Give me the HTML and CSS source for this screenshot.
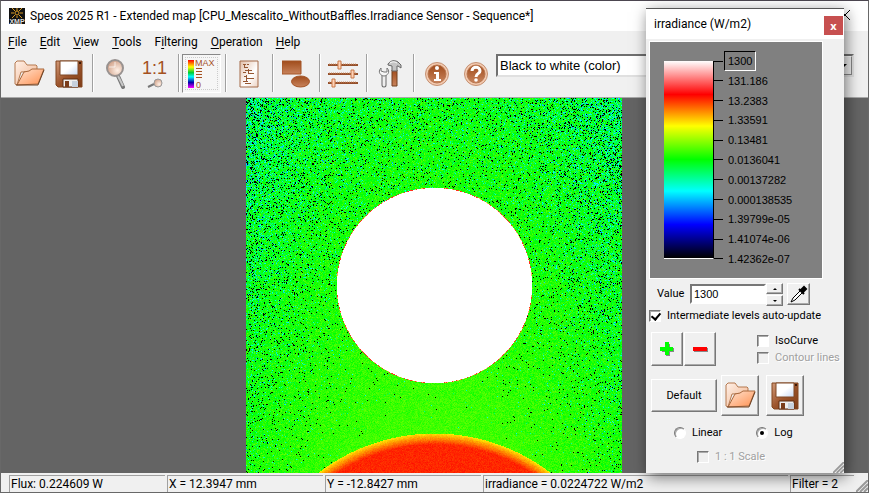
FILE: index.html
```html
<!DOCTYPE html>
<html lang="en">
<head>
<meta charset="utf-8">
<title>Speos 2025 R1 - Extended map</title>
<link rel="stylesheet" href="styles.css">
</head>
<body>
<svg class="defs" aria-hidden="true">
  <defs>
    <linearGradient id="orange" x1="0" y1="0" x2="1" y2="1"><stop offset="0" stop-color="#ffe4d2"/><stop offset="1" stop-color="#ff9050"/></linearGradient>
    <linearGradient id="pale" x1="0" y1="0" x2="1" y2="1"><stop offset="0" stop-color="#fff1e8"/><stop offset="1" stop-color="#f0b28c"/></linearGradient>
    <linearGradient id="brown" x1="0" y1="0" x2="1" y2="1"><stop offset="0" stop-color="#d29a78"/><stop offset=".5" stop-color="#9c542c"/><stop offset="1" stop-color="#7e3c16"/></linearGradient>
    <linearGradient id="rust" x1="0" y1="0" x2="0" y2="1"><stop offset="0" stop-color="#a04c1c"/><stop offset="1" stop-color="#c8835c"/></linearGradient>
    <linearGradient id="paper" x1="0" y1="0" x2="1" y2="1"><stop offset="0" stop-color="#fff"/><stop offset=".5" stop-color="#fff"/><stop offset="1" stop-color="#c9d9f5"/></linearGradient>
    <linearGradient id="note" x1="0" y1="0" x2="1" y2="1"><stop offset="0" stop-color="#e2bfa9"/><stop offset=".6" stop-color="#fff"/><stop offset="1" stop-color="#ecd2c2"/></linearGradient>
    <linearGradient id="rainbow" x1="0" y1="0" x2="0" y2="1"><stop offset="0" stop-color="#f00"/><stop offset=".25" stop-color="#ff0"/><stop offset=".45" stop-color="#0c3"/><stop offset=".6" stop-color="#0ff"/><stop offset=".8" stop-color="#00a"/><stop offset="1" stop-color="#f0f"/></linearGradient>
    <radialGradient id="lens" cx=".65" cy=".65" r=".7"><stop offset="0" stop-color="#fff0e6"/><stop offset="1" stop-color="#cf9f86"/></radialGradient>
    <symbol id="folder" viewBox="0 0 31 27">
      <path d="M1 24V3l2-2h7l3 4h9l1 1v5L7 12 3 25z" fill="url(#pale)" stroke="#b5794f"/>
      <path d="M3 25l7-13 5-1 3-2h12l-6 15z" fill="url(#orange)" stroke="#a9683d"/>
      <path d="M2 25h22l6-15" fill="none" stroke="#704325"/>
    </symbol>
    <symbol id="disk" viewBox="0 0 28 28">
      <path d="M1 1h26v26H3l-2-2z" fill="url(#brown)" stroke="#824620"/>
      <path d="M5 1h18v14H5z" fill="url(#paper)" stroke="#7f4827"/>
      <path d="M24 2h2v2h-2z" fill="#3c1a08"/>
      <path d="M8 19h15v8H8z" fill="#eee" stroke="#5c2d12"/>
      <path d="M10 21h4v6h-4z" fill="#7a3c1a"/><path d="M17 21h6v6h-6z" fill="#c6d0dc"/>
    </symbol>
  </defs>
</svg>

<div class="window">
  <header class="titlebar">
    <svg class="app-icon" viewBox="0 0 16 16"><path d="M0 0h16v16H0z" fill="#111"/><g stroke="#d99a24" fill="none"><circle cx="8" cy="5" r="2"/><path d="M8 0v3M8 8v2M2 5h3M11 5h3M3 0l3 3M13 0l-3 3M3 10l3-3M13 10l-3-3"/></g><text x="8" y="16" text-anchor="middle" class="badge-text">XMP</text></svg>
    <h1>Speos 2025 R1 - Extended map [CPU_Mescalito_WithoutBaffles.Irradiance Sensor - Sequence*]</h1>
    <button class="window-close" aria-label="Close window"><svg viewBox="0 0 10 10"><path d="M0 0l10 10M10 0L0 10"/></svg></button>
  </header>
  <nav class="menubar">
    <button><u>F</u>ile</button><button><u>E</u>dit</button><button><u>V</u>iew</button><button><u>T</u>ools</button><button>F<u>i</u>ltering</button><button><u>O</u>peration</button><button><u>H</u>elp</button>
  </nav>
  <div class="toolbar">
    <button aria-label="Open"><svg width="31" height="27"><use href="#folder"/></svg></button>
    <button aria-label="Save"><svg width="28" height="28"><use href="#disk"/></svg></button>
    <span class="sep"></span>
    <button aria-label="Zoom"><svg width="22" height="30" viewBox="0 0 22 30"><path d="M13 17l5 11" stroke="#777" stroke-width="4" stroke-linecap="round"/><path d="M13 17l5 10" stroke="#c9c9c9" stroke-width="2"/><circle cx="10" cy="9" r="8" fill="url(#lens)" stroke="#989290" stroke-width="2"/><path d="M10 3v5H4" stroke="#fff" fill="none" opacity=".7"/></svg></button>
    <button aria-label="Actual size" class="stack"><span class="ratio">1:1</span><svg width="16" height="10" viewBox="0 0 16 10"><path d="M7 6L1 9" stroke="#777" stroke-width="2"/><circle cx="11" cy="5" r="4" fill="url(#lens)" stroke="#999"/></svg></button>
    <span class="sep"></span>
    <button aria-label="Color scale" aria-pressed="true" class="pressed"><svg width="28" height="30" viewBox="0 0 28 30"><path d="M0 1h6v28H0z" fill="url(#rainbow)"/><path d="M8 9h6v1H8zM8 12h6v1H8zM8 15h6v1H8zM8 18h6v1H8z" fill="#a4511f"/><text x="7" y="7" class="scale-text">MAX</text><text x="8" y="29" class="scale-text">0</text></svg></button>
    <span class="sep"></span>
    <button aria-label="Report"><svg width="20" height="28" viewBox="0 0 20 28"><path d="M1 1h18v26H1z" fill="url(#note)" stroke="#a46b48"/><path d="M4 4.500h3M8 4.500h2M5 7.500h4M6 10.500h7M4 12.500h3M9 13.500h6M5 16.500h3M8 18.500h7M4 21.500h5M6 23.500h6M5.500 5v3M9.500 9v5M7.500 15v6" stroke="#965732" fill="none"/></svg></button>
    <span class="sep"></span>
    <button aria-label="Shapes"><svg width="28" height="28" viewBox="0 0 28 28"><path d="M0 1h19v13H0z" fill="url(#rust)" stroke="#a45527"/><ellipse cx="18.500" cy="21.500" rx="9" ry="5.500" fill="url(#rust)" stroke="#a45527"/></svg></button>
    <span class="sep"></span>
    <button aria-label="Settings"><svg width="32" height="28" viewBox="0 0 32 28"><path d="M1 5h30M1 14h30M1 23h30" stroke="#95502b" stroke-width="2"/><path d="M2 4h28M2 13h28M2 22h28" stroke="#cf916b" stroke-dasharray="1 1"/><g fill="#ffd3b8" stroke="#c87948"><path d="M11 1h3v8h-3zM24 10h3v8h-3zM5 19h3v8H5z"/></g></svg></button>
    <span class="sep"></span>
    <button aria-label="Options"><svg width="24" height="28" viewBox="0 0 24 28"><path d="M6 15v10" stroke="#666" stroke-width="5" stroke-linecap="round"/><path d="M6 14v11" stroke="#eee" stroke-width="3" stroke-linecap="round"/><path d="M3 8c-4 4 0 8 3 8s7-4 3-8v4H6l-3-1z" fill="#f6f6f6" stroke="#777"/><path d="M14 10h5v16h-5z" fill="url(#rust)" stroke="#71401f"/><path d="M10 4c3-4 7-4 10-2l3 3v3l-3-2h-1v5h-5V6l-4-1z" fill="#c4c4c4" stroke="#666"/><path d="M12 3c3-2 5-1 7 0" stroke="#fff" fill="none"/></svg></button>
    <span class="sep"></span>
    <button aria-label="Information"><svg width="26" height="26" viewBox="0 0 26 26"><circle cx="13" cy="13" r="11.500" fill="#f3c9af" stroke="#c49173"/><circle cx="13" cy="13" r="9" fill="url(#rust)" stroke="#b87750"/><circle cx="13" cy="7" r="2" fill="#fff"/><path d="M10 11h5v7h2v2H10v-2h2v-5h-2z" fill="#fff"/></svg></button>
    <button aria-label="Help"><svg width="26" height="26" viewBox="0 0 26 26"><circle cx="13" cy="13" r="11.500" fill="#f3c9af" stroke="#c49173"/><circle cx="13" cy="13" r="9" fill="url(#rust)" stroke="#b87750"/><path d="M9 10c0-5 8-5 8 0 0 3-4 2-4 6" fill="none" stroke="#fff" stroke-width="3"/><circle cx="13" cy="19" r="1.800" fill="#fff"/></svg></button>
    <div class="palette">
      <select aria-label="Color palette"><option>Black to white (color)</option></select>
      <span class="drop" aria-hidden="true"></span>
    </div>
  </div>
  <main class="view"><canvas id="map" width="376" height="375" aria-label="Irradiance map"></canvas></main>
  <footer class="status">
    <span>Flux: 0.224609 W</span><span>X = 12.3947 mm</span><span>Y = -12.8427 mm</span><span>irradiance = 0.0224722 W/m2</span><span>Filter = 2</span>
    <svg class="grip" viewBox="0 0 12 12"><path d="M0 12L12 0M4 12l8-8M8 12l4-4"/></svg>
  </footer>
</div>

<section class="dialog" role="dialog" aria-labelledby="dialog-title">
  <header class="dialog-title"><h2 id="dialog-title">irradiance (W/m2)</h2><button class="dialog-close" aria-label="Close">x</button></header>
  <div class="scale">
    <div class="ramp"></div>
    <ol class="levels">
      <li class="selected"><span>1300</span></li><li><span>131.186</span></li><li><span>13.2383</span></li><li><span>1.33591</span></li><li><span>0.13481</span></li><li><span>0.0136041</span></li><li><span>0.00137282</span></li><li><span>0.000138535</span></li><li><span>1.39799e-05</span></li><li><span>1.41074e-06</span></li><li><span>1.42362e-07</span></li>
    </ol>
  </div>
  <div class="value-row">
    <label for="value">Value</label>
    <input id="value" type="text" value="1300">
    <div class="spinner"><button class="up raised" aria-label="Increase"></button><button class="down raised" aria-label="Decrease"></button></div>
    <button class="pick raised" aria-label="Pick value"><svg width="18" height="18" viewBox="0 0 18 18"><path d="M10 6L3 13l-2 4 4-2 7-7" fill="#fff" stroke="#000"/><path d="M9 4l5 5" stroke="#000" stroke-width="2"/><path d="M11 5l3-3 2 2-3 3z" stroke="#000" stroke-width="2"/></svg></button>
  </div>
  <label class="check auto"><input type="checkbox" checked>Intermediate levels auto-update</label>
  <div class="level-row">
    <button class="square raised" aria-label="Add level"><svg width="16" height="16" viewBox="0 0 16 16"><path d="M9 3v12M3 9h12" stroke="#888" stroke-width="4"/><path d="M8 1v13M1 8h13" stroke="#0f0" stroke-width="4"/></svg></button>
    <button class="square raised" aria-label="Remove level"><svg width="16" height="16" viewBox="0 0 16 16"><path d="M2 9h14" stroke="#888" stroke-width="4"/><path d="M1 8h14" stroke="#f00" stroke-width="4"/></svg></button>
    <div class="curves">
      <label class="check"><input type="checkbox">IsoCurve</label>
      <label class="check"><input type="checkbox" disabled>Contour lines</label>
    </div>
  </div>
  <div class="file-row">
    <button class="default raised">Default</button>
    <button class="file raised" aria-label="Open levels"><svg width="31" height="27"><use href="#folder"/></svg></button>
    <button class="file raised" aria-label="Save levels"><svg width="28" height="28"><use href="#disk"/></svg></button>
  </div>
  <div class="mode-row">
    <label class="check"><input type="radio" name="mode">Linear</label>
    <label class="check"><input type="radio" name="mode" checked>Log</label>
  </div>
  <label class="check one-to-one"><input type="checkbox" disabled>1 : 1 Scale</label>
  <svg class="dialog-grip" viewBox="0 0 12 12"><path d="M0 12L12 0M4 12l8-8M8 12l4-4"/></svg>
</section>
<script src="map.js"></script>
</body>
</html>
```

FILE: styles.css
```css
* { box-sizing: border-box; }
body { margin: 0; background: #4c4650; color: #000; font: 12px Roboto, "Noto Sans", sans-serif; overflow: hidden; }
h1, h2 { margin: 0; font-size: 12px; font-weight: 400; }
button { padding: 0; border: 0; background: none; color: inherit; font: inherit; }
.defs { position: absolute; width: 0; height: 0; }

.window { display: flex; flex-direction: column; height: 100vh; border: 1px solid #686868; border-top-color: #4c4650; background: #f0f0f0; }
.titlebar { display: flex; align-items: center; flex: none; height: 30px; padding-left: 8px; background: #fff; }
.app-icon { width: 16px; height: 16px; margin-right: 5px; }
.badge-text { fill: #ddd; font: bold 7px "Liberation Sans", sans-serif; }
.titlebar h1 { flex: 1; white-space: nowrap; }
.window-close { width: 46px; height: 28px; }
.window-close svg { width: 10px; height: 10px; fill: none; stroke: #000; }

.menubar { display: flex; flex: none; gap: 13px; height: 21px; padding-left: 7px; }
.menubar button { line-height: 20px; }
.menubar u { text-underline-offset: 2px; }

.toolbar { display: flex; flex: none; height: 46px; padding: 2px 14px 3px 9px; border-bottom: 1px solid #a8a8a8; }
.toolbar > button { display: flex; flex: none; align-items: center; justify-content: center; width: 39px; height: 39px; }
.toolbar .stack { flex-direction: column; }
.ratio { height: 18px; color: #a4511f; font: 18px/16px "Liberation Sans", sans-serif; }
.scale-text { fill: #a4511f; font: 9px "Liberation Sans", sans-serif; }
.toolbar .pressed { border: 1px solid; border-color: #888 #fff #fff #888; background: #f6f6f6; outline: 1px dotted #ccc; outline-offset: -4px; }
.sep { flex: none; width: 2px; height: 38px; margin: 0 2px 0 4px; border-left: 1px solid #a0a0a0; border-right: 1px solid #fff; }
.palette { position: relative; flex: 1; height: 23px; margin-left: 1px; }
.palette select { appearance: none; width: 100%; height: 23px; padding: 0 2px; border: 2px solid; border-color: #707070 #e0e0e0 #e0e0e0 #707070; border-radius: 0; background: #fff; color: #000; font: 13px "Liberation Sans", sans-serif; }
.drop { position: absolute; top: 2px; right: 2px; width: 16px; height: 19px; border: 1px solid #888; border-top-color: #fff; background: #f0f0f0; pointer-events: none; }
.drop::after { content: ""; position: absolute; top: 7px; left: 4px; border: 3px solid transparent; border-top-color: #000; }

.view { display: flex; flex: 1; justify-content: center; min-height: 0; padding-right: 2px; background: #646464; overflow: hidden; }
.view canvas { flex: none; width: 376px; height: 375px; image-rendering: pixelated; }

.status { display: grid; flex: none; grid-template-columns: 156px 156px 156px 1fr 64px 12px; gap: 2px; height: 19px; padding: 2px 0 0 8px; }
.status span { padding-left: 1px; border: solid #a0a0a0; border-width: 1px 0 0 1px; line-height: 16px; white-space: nowrap; overflow: hidden; }
.grip { align-self: end; width: 12px; height: 12px; }
.grip path, .dialog-grip path { stroke: #999; stroke-width: 2; }

.dialog { position: absolute; top: 8px; right: 25px; width: 198px; border-top: 1px solid #555; background: #f0f0f0; box-shadow: 2px 4px 14px #0008; font-size: 11px; line-height: 14px; padding-bottom: 8px; }
.dialog-title { display: flex; align-items: center; justify-content: space-between; height: 30px; padding: 0 1px 0 8px; background: #fff; }
.dialog-close { width: 19px; height: 19px; margin-top: 3px; background: #c75050; color: #fff; font: bold 11px/18px "Open Sans", sans-serif; }

.scale { display: flex; align-items: flex-start; height: 238px; margin: 2px 21px 0 3px; padding: 19px 0 0 14px; border: 1px solid #fff; background: #808080; }
.ramp { width: 50px; height: 198px; border-right: 1px solid #000; border-bottom: 1px solid #fff; background: linear-gradient(#fff, #f00 17%, #ff0 33%, #0f0 50%, #0ff 66%, #00f 83%, #000); }
.levels { display: flex; flex-direction: column; justify-content: space-between; height: 216px; margin: -9px 0 0; padding: 0; list-style: none; font-family: "Liberation Sans", sans-serif; line-height: 18px; }
.levels li { display: flex; align-items: center; height: 18px; }
.levels li::before { content: ""; width: 9px; height: 1px; background: #000; }
.levels span { padding-left: 5px; }
.levels .selected span { margin-left: 1px; padding: 0 3px; border: 1px solid; border-color: #000 #fff #fff #000; }

.raised { display: flex; align-items: center; justify-content: center; border: 1px solid; border-color: #fff #777 #777 #fff; background: #f0f0f0; box-shadow: inset -1px -1px #aaa; }
.value-row { display: flex; height: 24px; margin-top: 5px; padding-left: 11px; }
.value-row label { width: 33px; line-height: 20px; }
.value-row input { width: 76px; height: 20px; padding: 0 2px; border: 2px solid; border-color: #777 #fff #fff #777; font: 11px "Liberation Sans", sans-serif; }
.spinner { display: flex; flex-direction: column; gap: 1px; width: 17px; margin: -1px 4px 0 0; }
.spinner button { width: 17px; height: 11px; }
.up::after, .down::after { content: ""; border: 2px solid transparent; }
.up::after { border-bottom-color: #000; margin-top: -2px; }
.down::after { border-top-color: #000; margin-bottom: -2px; }
.pick { width: 23px; height: 22px; margin-top: -1px; }

.check { display: flex; align-items: center; height: 16px; gap: 6px; white-space: nowrap; }
.check:has(:disabled) { color: #a0a0a0; text-shadow: 1px 1px #fff; }
.check input { appearance: none; position: relative; width: 12px; height: 12px; margin: 0; border: 1px solid; border-color: #777 #fff #fff #777; background: #fff; box-shadow: inset 1px 1px #aaa; }
.check input:disabled { background: #f0f0f0; }
.check [type="checkbox"]:checked::after { content: ""; position: absolute; left: 3px; top: 0; width: 4px; height: 7px; border: solid #000; border-width: 0 2px 2px 0; transform: rotate(40deg); }
.check [type="radio"] { border-radius: 50%; }
.check [type="radio"]:checked::after { content: ""; position: absolute; left: 3px; top: 3px; width: 4px; height: 4px; border-radius: 50%; background: #000; }
.auto { margin-left: 3px; }
.level-row { display: flex; gap: 1px; margin: 8px 0 0 5px; }
.square { width: 32px; height: 34px; }
.curves { display: flex; flex-direction: column; gap: 1px; margin: 1px 0 0 40px; }
.file-row { display: flex; align-items: center; gap: 4px; margin: 9px 0 0 5px; }
.default { width: 66px; height: 33px; }
.file { width: 38px; height: 41px; }
.file + .file { margin-left: 3px; }
.mode-row { display: flex; gap: 34px; margin: 9px 0 0 28px; }
.one-to-one { margin: 8px 0 0 51px; }
.dialog-grip { position: absolute; right: 0; bottom: 0; width: 11px; height: 11px; }
```

FILE: map.js
```js
const canvas = document.getElementById("map");
const ctx = canvas.getContext("2d");
const image = ctx.createImageData(canvas.width, canvas.height);

let seed = 20251;
function random() {
  seed = (seed + 0x6d2b79f5) | 0;
  let r = Math.imul(seed ^ (seed >>> 15), 1 | seed);
  r = (r + Math.imul(r ^ (r >>> 7), 61 | r)) ^ r;
  return ((r ^ (r >>> 14)) >>> 0) / 4294967296;
}
const noise = () => random() + random() + random() - 1.5;

// Palette position: 0 is blue, 1 cyan, 2 green, 3 yellow, 4 red.
function color(t) {
  t = Math.max(0, Math.min(4, t));
  if (t < 1) return [0, 255 * t, 255];
  if (t < 2) return [0, 255, 255 * (2 - t)];
  if (t < 3) return [255 * (t - 2), 255, 0];
  return [255, 255 * (4 - t), 0];
}

for (let y = 0; y < canvas.height; y++) {
  for (let x = 0; x < canvas.width; x++) {
    const side = Math.abs(x - 188) / 188;
    const height = 1 - y / 375;
    const far = 0.45 * side * side + 0.6 * height;
    const disc = Math.hypot(x - 188, y - 187);
    const source = 191 - Math.hypot(x - 188, y - 526);
    let rgb;
    if (disc < 97.5) rgb = [255, 255, 255];
    else if (disc < 98) rgb = random() < 0.6 ? [255, 50, 30] : [255, 190, 90];
    else if (source > 0) rgb = color(3.1 + 0.75 * Math.min(1, source / 11) + noise() * 0.08);
    else if (random() < 0.1 * far * far + 0.06 * far - 0.006) rgb = [0, 0, 0];
    else {
      let t = 2.28 - 0.42 * far + noise() * (0.12 + 0.32 * far);
      if (random() < 0.4 * far * far) t -= random() * 1.2;
      rgb = color(t);
    }
    image.data.set([...rgb, 255], (y * canvas.width + x) * 4);
  }
}
ctx.putImageData(image, 0, 0);
```
